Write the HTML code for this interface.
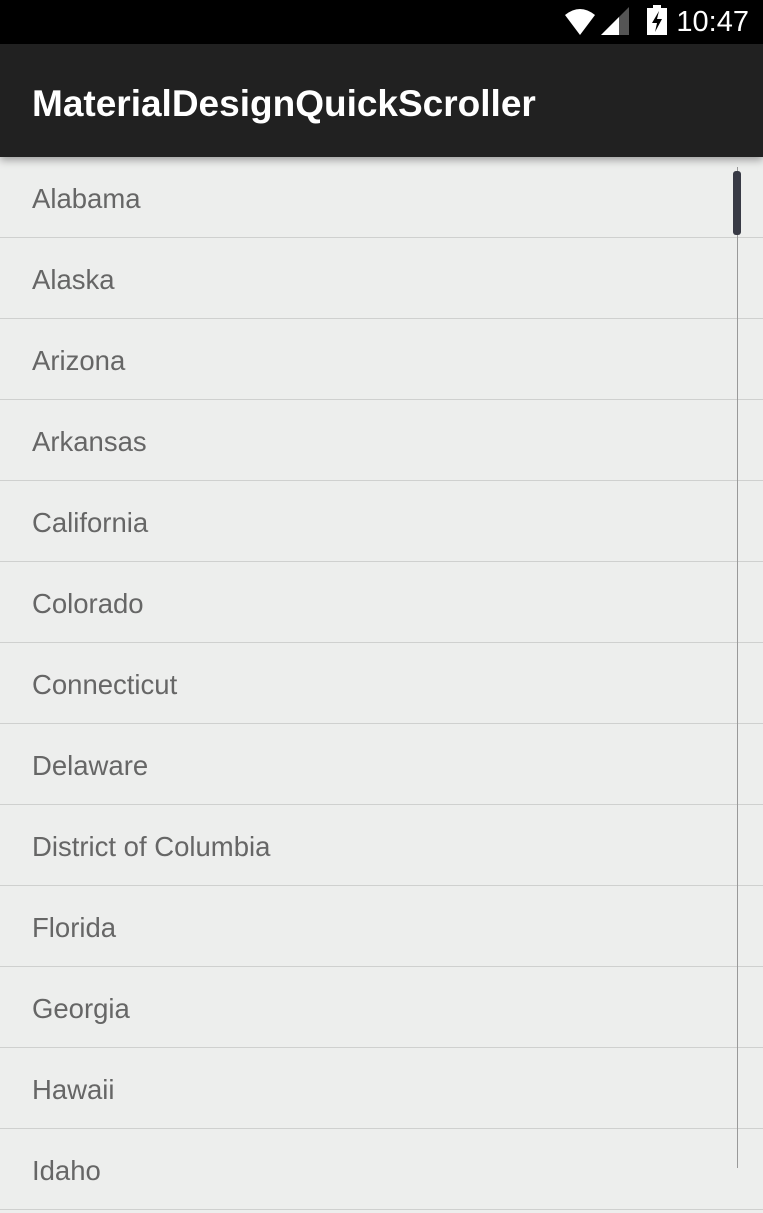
<!DOCTYPE html>
<html><head><style>
body{margin:0;width:763px;height:1176px;overflow:hidden;background:#edeeed;font-family:"Liberation Sans",sans-serif;position:relative}
.sb{position:absolute;top:0;left:0;width:763px;height:44px;background:#000}
.tb{position:absolute;top:44px;left:0;width:763px;height:113px;background:#212121;box-shadow:0 3px 8px rgba(0,0,0,.35);z-index:2}
.tb span{position:absolute;left:32px;top:38px;color:#fff;font-size:37px;line-height:44px;font-weight:bold}
.list{position:absolute;top:157px;left:0;width:763px}
.row{height:80px;border-bottom:1px solid #cfd0cf;color:#666;font-size:27.5px;line-height:84px;padding-left:32px}
.line{position:absolute;left:737px;top:167px;width:1px;height:1001px;background:#999}
.thumb{position:absolute;left:733px;top:171px;width:8px;height:64px;background:#383a45;border-radius:3px}
.time{position:absolute;right:14px;top:4px;color:#fff;font-size:29px;line-height:36px}
</style></head><body>
<div class="sb">
<svg style="position:absolute;left:563px;top:5px" width="70" height="30" viewBox="0 0 70 30">
<path d="M2 10 Q17 -2 32 10 L17 30 Z" fill="#fff"/>
<path d="M38 30 L66 2 L66 30 Z" fill="#555"/>
<path d="M38 30 L56 12 L56 30 Z" fill="#fff"/>
</svg>
<svg style="position:absolute;left:646px;top:5px" width="22" height="30" viewBox="0 0 22 30">
<rect x="7" y="0" width="8" height="3" fill="#fff"/>
<rect x="1" y="3" width="20" height="27" fill="#fff"/>
<path d="M13 6 L6 18 L11 18 L9 27 L16 14 L11 14 Z" fill="#000"/>
</svg>
<div class="time">10:47</div>
</div>
<div class="tb"><span>MaterialDesignQuickScroller</span></div>
<div class="list">
<div class="row">Alabama</div><div class="row">Alaska</div><div class="row">Arizona</div><div class="row">Arkansas</div><div class="row">California</div><div class="row">Colorado</div><div class="row">Connecticut</div><div class="row">Delaware</div><div class="row">District of Columbia</div><div class="row">Florida</div><div class="row">Georgia</div><div class="row">Hawaii</div><div class="row">Idaho</div>
</div>
<div class="line"></div><div class="thumb"></div>
</body></html>
